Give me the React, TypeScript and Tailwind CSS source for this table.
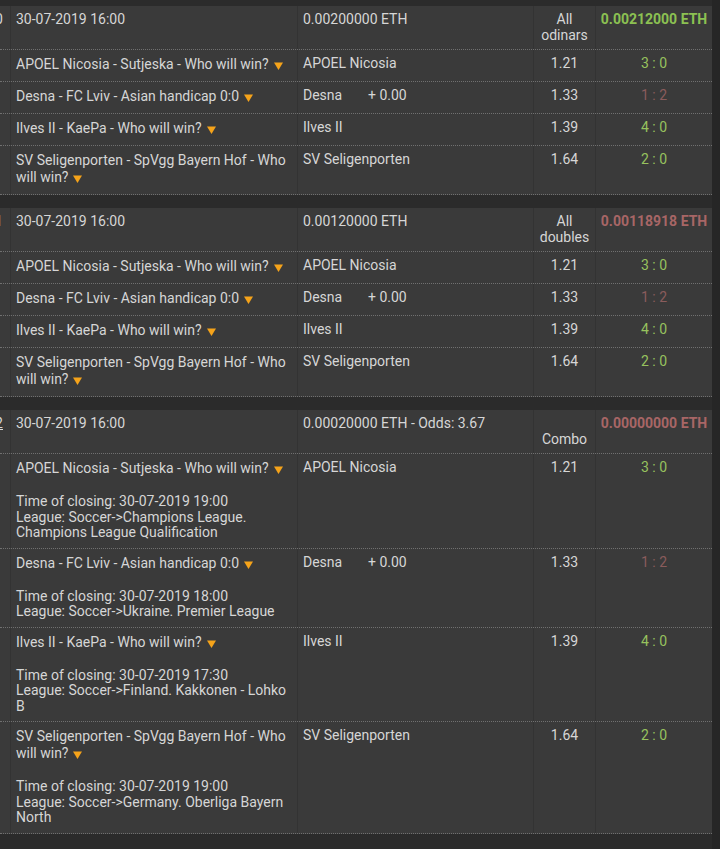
import React from "react";

type Leg = {
  title: string;
  pick: string;
  hcp?: string;
  odds: string;
  score: string;
  won: boolean;
  closing: string;
  league: string;
};

type Bet = {
  num: string;
  date: string;
  stake: string;
  kind: string[];
  result: string;
  win: boolean;
  details: boolean;
  link?: boolean;
};

const legs: Leg[] = [
  { title: "APOEL Nicosia - Sutjeska - Who will win?", pick: "APOEL Nicosia", odds: "1.21", score: "3 : 0", won: true, closing: "30-07-2019 19:00", league: "Soccer->Champions League. Champions League Qualification" },
  { title: "Desna - FC Lviv - Asian handicap 0:0", pick: "Desna", hcp: "+ 0.00", odds: "1.33", score: "1 : 2", won: false, closing: "30-07-2019 18:00", league: "Soccer->Ukraine. Premier League" },
  { title: "Ilves II - KaePa - Who will win?", pick: "Ilves II", odds: "1.39", score: "4 : 0", won: true, closing: "30-07-2019 17:30", league: "Soccer->Finland. Kakkonen - Lohko B" },
  { title: "SV Seligenporten - SpVgg Bayern Hof - Who will win?", pick: "SV Seligenporten", odds: "1.64", score: "2 : 0", won: true, closing: "30-07-2019 19:00", league: "Soccer->Germany. Oberliga Bayern North" },
];

const bets: Bet[] = [
  { num: "10", date: "30-07-2019 16:00", stake: "0.00200000 ETH", kind: ["All", "odinars"], result: "0.00212000 ETH", win: true, details: false },
  { num: "11", date: "30-07-2019 16:00", stake: "0.00120000 ETH", kind: ["All", "doubles"], result: "0.00118918 ETH", win: false, details: false },
  { num: "12", date: "30-07-2019 16:00", stake: "0.00020000 ETH - Odds: 3.67", kind: ["\u00a0", "Combo"], result: "0.00000000 ETH", win: false, details: true, link: true },
];

const row = "grid grid-cols-[11px_287px_236px_62px_116px] border-b border-dotted border-[#707070]";
const cell = "border-r border-[#333333]";

// little orange dropdown marker after each match title
function Caret() {
  return (
    <svg width="9" height="8" viewBox="0 0 9 8" className="inline-block ml-[5px] align-[-1px]">
      <path d="M0 0.5H9L4.5 8Z" fill="#f5a31a" />
    </svg>
  );
}

function LegRow({ leg, details }: { leg: Leg; details: boolean }) {
  return (
    <div className={row}>
      <div className={cell} />
      <div className={`${cell} pl-[5px] pr-[10px] pt-[6px] ${details ? "pb-[7px]" : "pb-[8px]"}`}>
        <div className="leading-[17px]">
          {leg.title}
          <Caret />
        </div>
        {details && (
          <div className="mt-[17px] leading-[15.5px]">
            <div>Time of closing: {leg.closing}</div>
            <div>League: {leg.league}</div>
          </div>
        )}
      </div>
      <div className={`${cell} pl-[5px] pt-[5px] leading-[16px] flex`}>
        <span className="w-[65px] shrink-0 whitespace-nowrap">{leg.pick}</span>
        {leg.hcp && <span>{leg.hcp}</span>}
      </div>
      <div className={`${cell} pt-[5px] leading-[16px] text-center`}>{leg.odds}</div>
      <div className={`pt-[5px] leading-[16px] text-center ${leg.won ? "text-[#97c25e]" : "text-[#8a5c5c]"}`}>
        {leg.score}
      </div>
    </div>
  );
}

function BetBlock({ bet }: { bet: Bet }) {
  return (
    <div className="bg-[#3a3a3a]">
      <div className={row}>
        <div className={`${cell} flex justify-end overflow-hidden whitespace-nowrap pt-[5px] pr-[7px] leading-[16px]`}>
          <span className={bet.link ? "underline" : ""}>{bet.num}</span>
        </div>
        <div className={`${cell} pl-[5px] pt-[5px] leading-[16px]`}>{bet.date}</div>
        <div className={`${cell} pl-[5px] pt-[5px] leading-[16px]`}>{bet.stake}</div>
        <div className={`${cell} pt-[5px] pb-[6px] leading-[16px] text-center`}>
          <div>{bet.kind[0]}</div>
          <div>{bet.kind[1]}</div>
        </div>
        <div className={`pt-[5px] leading-[16px] text-center font-bold ${bet.win ? "text-[#8cc152]" : "text-[#a86666]"}`}>
          {bet.result}
        </div>
      </div>
      {legs.map((leg) => (
        <LegRow key={leg.title} leg={leg} details={bet.details} />
      ))}
    </div>
  );
}

export default function App() {
  return (
    <div className="flex h-[849px] w-[720px] overflow-hidden bg-[#2b2b2b] text-[14px] text-[#d6d6d6] font-['Roboto',sans-serif]">
      <div className="w-[712px] flex flex-col gap-[13px] pt-[6px]">
        {bets.map((bet) => (
          <BetBlock key={bet.num} bet={bet} />
        ))}
      </div>
      <div className="w-[8px] bg-[#262626]" />
    </div>
  );
}
